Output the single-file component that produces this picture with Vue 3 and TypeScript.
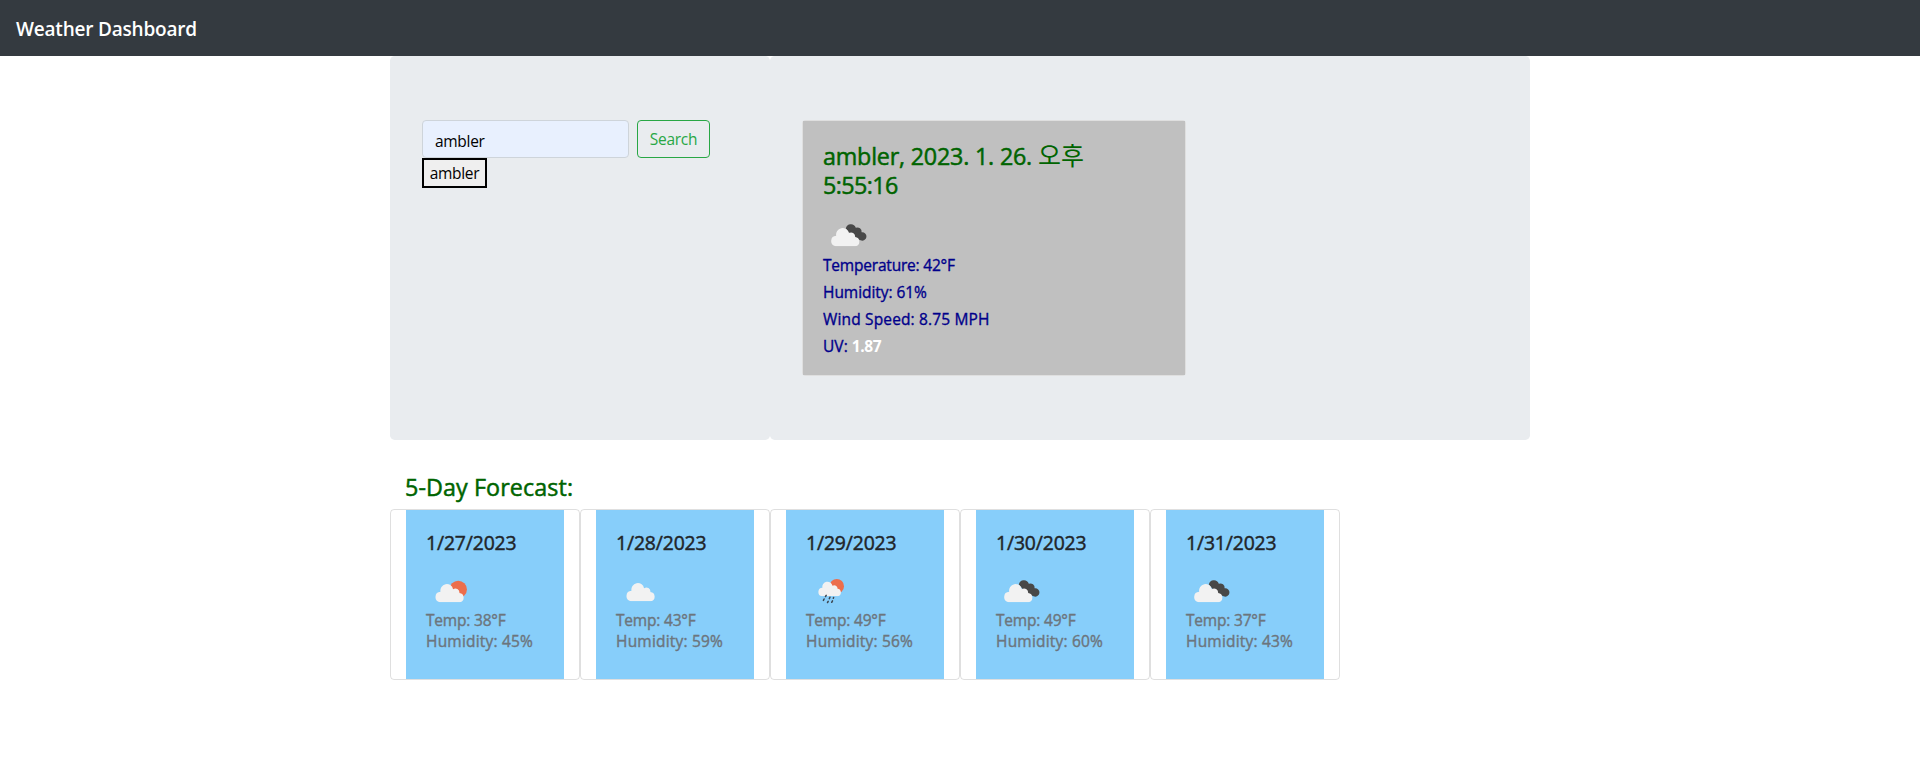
<script setup lang="ts">
import { ref } from 'vue'

type Sky = 'few' | 'scattered' | 'broken' | 'rain'

interface Day {
  date: string
  sky: Sky
  temp: number
  humidity: number
}

const city = ref('ambler')
const history = ref<string[]>(['ambler'])

const current = {
  temp: 42,
  humidity: 61,
  wind: 8.75,
  uv: 1.87,
}

const days: Day[] = [
  { date: '1/27/2023', sky: 'few', temp: 38, humidity: 45 },
  { date: '1/28/2023', sky: 'scattered', temp: 43, humidity: 59 },
  { date: '1/29/2023', sky: 'rain', temp: 49, humidity: 56 },
  { date: '1/30/2023', sky: 'broken', temp: 49, humidity: 60 },
  { date: '1/31/2023', sky: 'broken', temp: 37, humidity: 43 },
]
</script>

<template>
  <svg class="symbols" aria-hidden="true">
    <symbol id="cloud" viewBox="0 0 30 19">
      <path d="M5.3 19A5.3 5.3 0 0 1 6 8.5A6.4 6.4 0 0 1 18.6 6A4 4 0 0 1 24.9 9.7A4.7 4.7 0 0 1 25.3 19Z" />
    </symbol>
    <symbol id="few" viewBox="0 0 50 50">
      <circle cx="33.2" cy="23.4" r="8.7" fill="#ec6e4c" />
      <use href="#cloud" x="9.5" y="17.2" width="30" height="19" fill="#f2f2f2" />
    </symbol>
    <symbol id="scattered" viewBox="0 0 50 50">
      <use href="#cloud" x="10.5" y="16.2" width="30" height="19" fill="#f2f2f2" />
    </symbol>
    <symbol id="broken" viewBox="0 0 50 50">
      <path
        d="M23.8 18.4A5.2 5.2 0 0 1 33.8 17.8A4.2 4.2 0 0 1 39.6 22.3A4.2 4.2 0 1 1 38.6 30.3L32 28Z"
        fill="#484848"
      />
      <use href="#cloud" x="8.2" y="17.2" width="30" height="19" fill="#f2f2f2" />
    </symbol>
    <symbol id="rain" viewBox="0 0 50 50">
      <circle cx="31.8" cy="20.2" r="7.2" fill="#ec6e4c" />
      <use href="#cloud" x="12.6" y="15" width="24" height="15.2" fill="#f2f2f2" />
      <path
        d="M21.2 29.3l-.7 1.2M25 31.2l-.7 1.4M28.6 31.4l-.3 .8M19.1 33l-.7 1.4M23.2 35.3l-.7 1.2M27.5 34.8l-.8 1.5"
        stroke="#3d4650"
        stroke-width="1.5"
        stroke-linecap="round"
      />
    </symbol>
  </svg>

  <nav class="navbar">
    <span class="brand">Weather Dashboard</span>
  </nav>

  <main class="container">
    <section class="top">
      <div class="panel search-panel">
        <form class="search" @submit.prevent>
          <input v-model="city" class="field" type="text" aria-label="City" />
          <button class="search-btn" type="submit">Search</button>
        </form>
        <button v-for="name in history" :key="name" class="history-btn" type="button">{{ name }}</button>
      </div>

      <div class="panel current-panel">
        <article class="current">
          <div class="current-body">
            <h4 class="heading">
              <span class="city">ambler, 2023. 1. 26. <span class="hangul">오후</span></span><br />
              <span class="time">5:55:16</span>
            </h4>
            <svg class="icon" width="50" height="50"><use href="#broken" /></svg>
            <p class="stat temperature">Temperature: {{ current.temp }}°F</p>
            <p class="stat humidity">Humidity: {{ current.humidity }}%</p>
            <p class="stat wind">Wind Speed: {{ current.wind }} MPH</p>
            <p class="stat uv">UV: <b class="uv-index">{{ current.uv }}</b></p>
          </div>
        </article>
      </div>
    </section>

    <h4 class="forecast-title">5-Day Forecast:</h4>

    <section class="forecast">
      <article v-for="day in days" :key="day.date" class="day">
        <div class="day-body">
          <h5 class="date">{{ day.date }}</h5>
          <svg class="icon" width="50" height="50"><use :href="'#' + day.sky" /></svg>
          <p class="reading day-temp">Temp: {{ day.temp }}°F</p>
          <p class="reading day-humidity">Humidity: {{ day.humidity }}%</p>
        </div>
      </article>
    </section>
  </main>
</template>

<style>
body {
  margin: 0;
  background: #fff;
}
</style>

<style scoped>
.symbols {
  position: absolute;
  width: 0;
  height: 0;
}

.navbar,
.container,
.field,
.search-btn,
.history-btn {
  font-family: 'Open Sans', 'Noto Sans', 'Noto Sans CJK KR', sans-serif;
  font-size: 16px;
  box-sizing: border-box;
}

.navbar {
  display: flex;
  align-items: center;
  height: 56px;
  padding: 0 16px;
  background: #343a40;
}

.brand {
  color: #fff;
  font-size: 19px;
  font-weight: 600;
  line-height: 30px;
  letter-spacing: -0.2px;
  padding-top: 2px;
}

.container {
  width: 1140px;
  margin: 0 auto;
}

.top {
  display: flex;
}

.panel {
  box-sizing: border-box;
  height: 384px;
  padding: 64px 32px;
  border-radius: 4.8px;
  background: #e9ecef;
}

.search-panel {
  width: 380px;
}

.current-panel {
  width: 760px;
}

.search {
  display: flex;
  gap: 8px;
}

.field {
  width: 207px;
  height: 38px;
  padding: 3px 12px 0;
  border: 1px solid #ced4da;
  border-radius: 4px;
  background: #e8f0fe;
  color: #000;
  font-size: 15.5px;
  letter-spacing: -0.3px;
  outline: none;
}

.search-btn {
  width: 73px;
  height: 38px;
  padding: 0 0 1px;
  border: 1px solid #28a745;
  border-radius: 4px;
  background: transparent;
  color: #28a745;
  font-size: 15.5px;
  letter-spacing: -0.3px;
}

.history-btn {
  display: block;
  width: 65px;
  height: 30px;
  padding: 0;
  border: 2px solid #000;
  background: #efefef;
  color: #000;
  font-size: 15.5px;
  letter-spacing: -0.3px;
}

.current {
  box-sizing: border-box;
  width: 384px;
  height: 256px;
  border: 1px solid rgba(0, 0, 0, 0.125);
  border-radius: 4px;
  background: #fff;
}

.current-body {
  box-sizing: border-box;
  height: 254px;
  padding: 21px 20px 20px;
  background: silver;
}

.heading {
  margin: 0 0 10px;
  color: #006400;
  font-size: 23.3px;
  font-weight: 400;
  line-height: 28.8px;
  letter-spacing: -0.2px;
  -webkit-text-stroke: 0.5px currentColor;
}

.time {
  letter-spacing: -0.6px;
}

.hangul {
  font-size: 25px;
  line-height: 1;
  letter-spacing: 0;
  -webkit-text-stroke: 0;
}

.icon {
  display: block;
  margin: 0 0 -6px -1px;
}

.stat {
  margin: 0 0 8px;
  color: #00008b;
  font-size: 15.5px;
  font-weight: 400;
  line-height: 19px;
  -webkit-text-stroke: 0.35px currentColor;
}

.temperature {
  margin-top: 2px;
  letter-spacing: -0.2px;
}

.humidity {
  letter-spacing: -0.05px;
}

.wind {
  letter-spacing: 0.15px;
}

.uv {
  letter-spacing: 0.05px;
}

.uv-index {
  color: #fff;
  font-weight: 700;
  letter-spacing: -0.4px;
  -webkit-text-stroke: 0;
}

.forecast-title {
  margin: 33px 0 7px 15px;
  color: #006400;
  font-size: 23.3px;
  font-weight: 400;
  line-height: 29px;
  letter-spacing: 0.1px;
  -webkit-text-stroke: 0.5px currentColor;
}

.forecast {
  display: flex;
}

.day {
  box-sizing: border-box;
  width: 190px;
  height: 171px;
  padding: 0 15px;
  border: 1px solid rgba(0, 0, 0, 0.125);
  border-radius: 4px;
}

.day-body {
  box-sizing: border-box;
  height: 169px;
  padding: 21px 20px 20px;
  background: #87cefa;
}

.date {
  margin: 0 0 11px;
  color: #212529;
  font-size: 19.4px;
  font-weight: 400;
  line-height: 24px;
  letter-spacing: -0.15px;
  -webkit-text-stroke: 0.45px currentColor;
}

.reading {
  margin: 0;
  color: #6c757d;
  font-size: 15.5px;
  font-weight: 400;
  line-height: 21px;
  white-space: nowrap;
  -webkit-text-stroke: 0.4px currentColor;
}

.day-temp {
  letter-spacing: -0.2px;
}

.day-humidity {
  letter-spacing: 0.2px;
}
</style>
